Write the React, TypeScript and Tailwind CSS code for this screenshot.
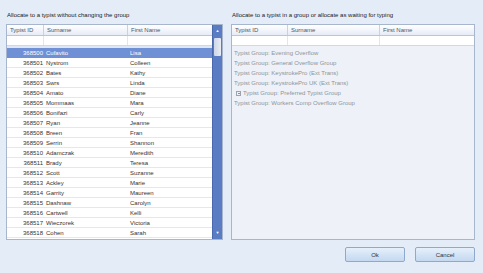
import React from "react";

const typists: [string, string, string][] = [
  ["368500", "Cufavito", "Lisa"],
  ["368501", "Nystrom", "Colleen"],
  ["368502", "Bates", "Kathy"],
  ["368503", "Swrs", "Linda"],
  ["368504", "Amato", "Diane"],
  ["368505", "Mommaas", "Mara"],
  ["368506", "Bonifazi", "Carly"],
  ["368507", "Ryan", "Jeanne"],
  ["368508", "Breen", "Fran"],
  ["368509", "Serrin", "Shannon"],
  ["368510", "Adamczak", "Meredith"],
  ["368511", "Brady", "Teresa"],
  ["368512", "Scott", "Suzanne"],
  ["368513", "Ackley", "Marie"],
  ["368514", "Garrity", "Maureen"],
  ["368515", "Dashnaw", "Carolyn"],
  ["368516", "Cartwell", "Kelli"],
  ["368517", "Wieczorek", "Victoria"],
  ["368518", "Cohen", "Sarah"],
];

const groups = [
  "Typist Group: Evening Overflow",
  "Typist Group: General Overflow Group",
  "Typist Group: KeystrokePro (Ext Trans)",
  "Typist Group: KeystrokePro UK  (Ext Trans)",
  "Typist Group: Preferred Typist Group",
  "Typist Group: Workers Comp Overflow Group",
];

function Header({ cols }: { cols: [string, string][] }) {
  return (
    <div className="flex h-[11px] bg-gradient-to-b from-[#ffffff] to-[#e6ecf6] border-b border-[#b9c6d9] text-[#4a5566]">
      {cols.map(([label, w], i) => (
        <div key={label} className={`${w} flex items-center pl-[3px] ${i < cols.length - 1 ? "border-r border-[#c8d2e0]" : ""}`}>
          {label}
        </div>
      ))}
    </div>
  );
}

function FilterRow({ cols }: { cols: string[] }) {
  return (
    <div className="flex h-[10px] bg-white border-b border-[#cfd8e6]">
      {cols.map((w, i) => (
        <div key={i} className={`${w} ${i < cols.length - 1 ? "border-r border-[#e2e7ef]" : ""}`} />
      ))}
    </div>
  );
}

export default function App() {
  return (
    <div
      className="w-[483px] h-[273px] bg-[#e4ecf8] text-[6px] leading-none text-[#333] overflow-hidden"
      style={{ fontFamily: '"Liberation Sans", Arial, sans-serif' }}
    >
      <div className="flex gap-[8px] pl-[6px] pt-[12px]">
        {/* left side */}
        <div className="w-[217px] flex flex-col">
          <div className="h-[12px] pl-[1px] text-[#222]">Allocate to a typist without changing the group</div>
          <div className="h-[216px] flex border border-[#a7b6cc] bg-[#dfe7f5]">
            <div className="flex-1 flex flex-col">
              <Header cols={[["Typist ID", "w-[37px]"], ["Surname", "w-[84px]"], ["First Name", "flex-1"]]} />
              <FilterRow cols={["w-[37px]", "w-[84px]", "flex-1"]} />
              <div className="h-[2px]" />
              <div className="flex-1 bg-white">
                {typists.map(([id, sur, first], i) => (
                  <div
                    key={id}
                    className={`flex h-[10px] items-center border-b ${i === 0 ? "bg-[#7090d6] text-white border-[#7090d6]" : "border-[#e3e7ee] text-[#333]"}`}
                  >
                    <div className="w-[37px] text-right pr-[1px]">{id}</div>
                    <div className="w-[84px] pl-[2px]">{sur}</div>
                    <div className="flex-1 pl-[2px]">{first}</div>
                  </div>
                ))}
              </div>
            </div>
            {/* scrollbar */}
            <div className="w-[10px] bg-[#5a7cc3] flex flex-col items-center border-l border-[#4a69ad]">
              <div className="w-[8px] h-[9px] mt-[1px] flex items-center justify-center text-[4px] text-white">▲</div>
              <div className="w-[7px] h-[18px] mt-[3px] bg-gradient-to-r from-[#cdd7e8] to-[#e8edf5] rounded-[1px]" />
              <div className="flex-1" />
              <div className="w-[8px] h-[9px] mb-[2px] flex items-center justify-center text-[4px] text-white">▼</div>
            </div>
          </div>
        </div>

        {/* right side */}
        <div className="w-[244px] flex flex-col">
          <div className="h-[12px] pl-[1px] text-[#222]">Allocate to a typist in a group or allocate as waiting for typing</div>
          <div className="h-[216px] flex flex-col border border-[#a7b6cc] bg-[#eef2f8]">
            <Header cols={[["Typist ID", "w-[56px]"], ["Surname", "w-[92px]"], ["First Name", "flex-1"]]} />
            <FilterRow cols={["w-[56px]", "w-[92px]", "flex-1"]} />
            <div className="pt-[2px] text-[#8c929b]">
              {groups.map((g) => (
                <div key={g} className="h-[10px] flex items-center pl-[2px]">
                  {g.includes("Preferred") && (
                    <span className="inline-block w-[5px] h-[5px] border border-[#9aa3ae] mr-[2px] ml-[2px] relative">
                      <span className="absolute left-[1px] top-[1.5px] w-[2px] h-[1px] bg-[#8c929b]" />
                    </span>
                  )}
                  {g}
                </div>
              ))}
            </div>
          </div>
        </div>
      </div>

      {/* buttons */}
      <div className="flex justify-end gap-[10px] pr-[8px] mt-[7px]">
        <button className="w-[60px] h-[15px] border border-[#8fa9cd] rounded-[2px] bg-gradient-to-b from-[#e6f0fb] to-[#c4d8f0] text-[#333] text-[6px]">
          Ok
        </button>
        <button className="w-[60px] h-[15px] border border-[#8fa9cd] rounded-[2px] bg-gradient-to-b from-[#e6f0fb] to-[#c4d8f0] text-[#333] text-[6px]">
          Cancel
        </button>
      </div>
    </div>
  );
}
